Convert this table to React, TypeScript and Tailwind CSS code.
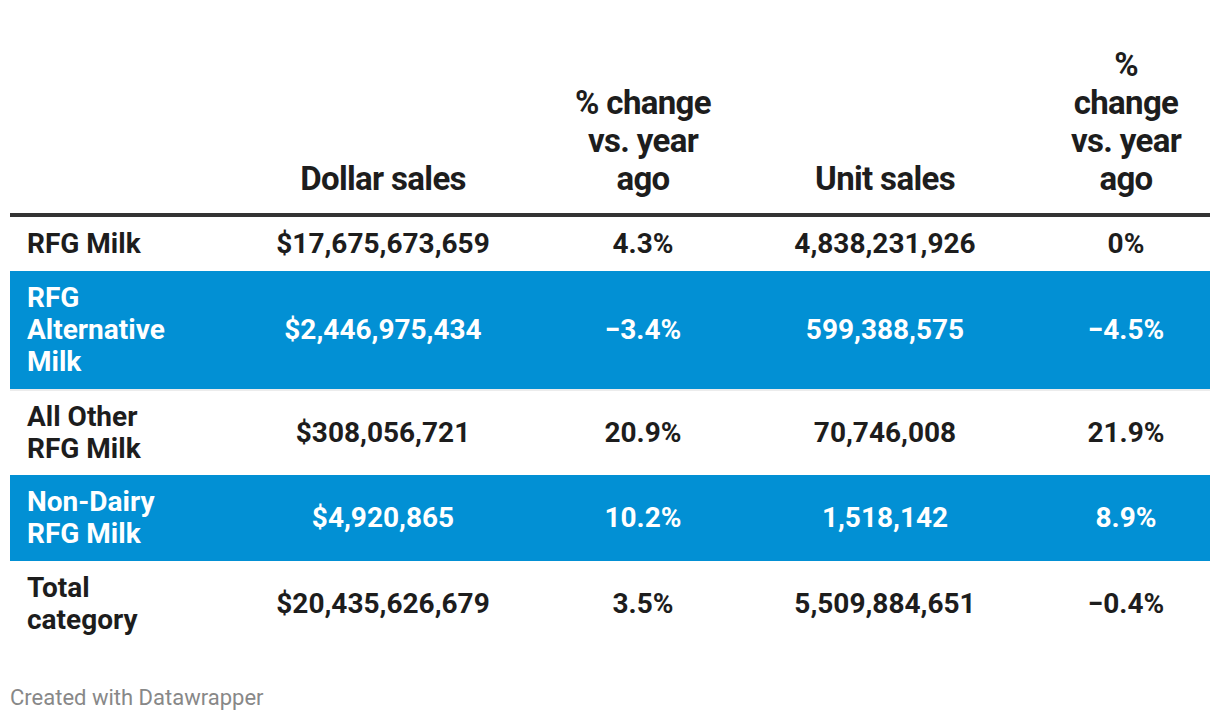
import React from 'react';

const font = { fontFamily: 'Roboto, "Liberation Sans", sans-serif' };

type Row = {
  label: string[];
  dollar: string;
  dollarChg: string;
  units: string;
  unitChg: string;
  blue?: boolean;
  rule?: boolean;
  tight?: boolean;
};

const rows: Row[] = [
  { label: ['RFG Milk'], dollar: '$17,675,673,659', dollarChg: '4.3%', units: '4,838,231,926', unitChg: '0%' },
  {
    label: ['RFG', 'Alternative', 'Milk'],
    dollar: '$2,446,975,434',
    dollarChg: '\u22123.4%',
    units: '599,388,575',
    unitChg: '\u22124.5%',
    blue: true,
    rule: true,
  },
  {
    label: ['All Other', 'RFG Milk'],
    dollar: '$308,056,721',
    dollarChg: '20.9%',
    units: '70,746,008',
    unitChg: '21.9%',
    tight: true,
  },
  {
    label: ['Non-Dairy', 'RFG Milk'],
    dollar: '$4,920,865',
    dollarChg: '10.2%',
    units: '1,518,142',
    unitChg: '8.9%',
    blue: true,
  },
  { label: ['Total', 'category'], dollar: '$20,435,626,679', dollarChg: '3.5%', units: '5,509,884,651', unitChg: '\u22120.4%' },
];

const cols = 'grid grid-cols-[198px_350px_170px_314px_168px]';

function Lines({ lines }: { lines: string[] }) {
  return (
    <>
      {lines.map((l, i) => (
        <div key={i}>{l}</div>
      ))}
    </>
  );
}

export default function App() {
  return (
    <div className="w-[1220px] h-[722px] bg-white pt-[46px] text-[#1d1d1d]" style={font}>
      <div className="ml-[10px] w-[1200px]">
        {/* header */}
        <div className={`${cols} items-end border-b-4 border-[#333333] pb-[15px] text-[33px] leading-[38px] font-bold tracking-[-0.02em]`}>
          <div />
          <div className="text-center">Dollar sales</div>
          <div className="text-center">
            <Lines lines={['% change', 'vs. year', 'ago']} />
          </div>
          <div className="text-center">Unit sales</div>
          <div className="text-center">
            <Lines lines={['%', 'change', 'vs. year', 'ago']} />
          </div>
        </div>

        {/* body */}
        {rows.map((r, i) => (
          <div
            key={i}
            className={`${cols} items-center ${r.tight ? 'py-[10px]' : 'py-[11px]'} text-[28px] leading-[32px] font-bold ${
              r.blue ? 'bg-[#0290d4] text-white' : ''
            } ${r.rule ? 'border-b-2 border-[#ececec]' : ''}`}
          >
            <div className="pl-[17px]">
              <Lines lines={r.label} />
            </div>
            <div className="text-center">{r.dollar}</div>
            <div className="text-center">{r.dollarChg}</div>
            <div className="text-center">{r.units}</div>
            <div className="text-center">{r.unitChg}</div>
          </div>
        ))}
      </div>

      <div className="ml-[10px] mt-[38px] text-[22px] leading-[26px] text-[#888888]">Created with Datawrapper</div>
    </div>
  );
}
